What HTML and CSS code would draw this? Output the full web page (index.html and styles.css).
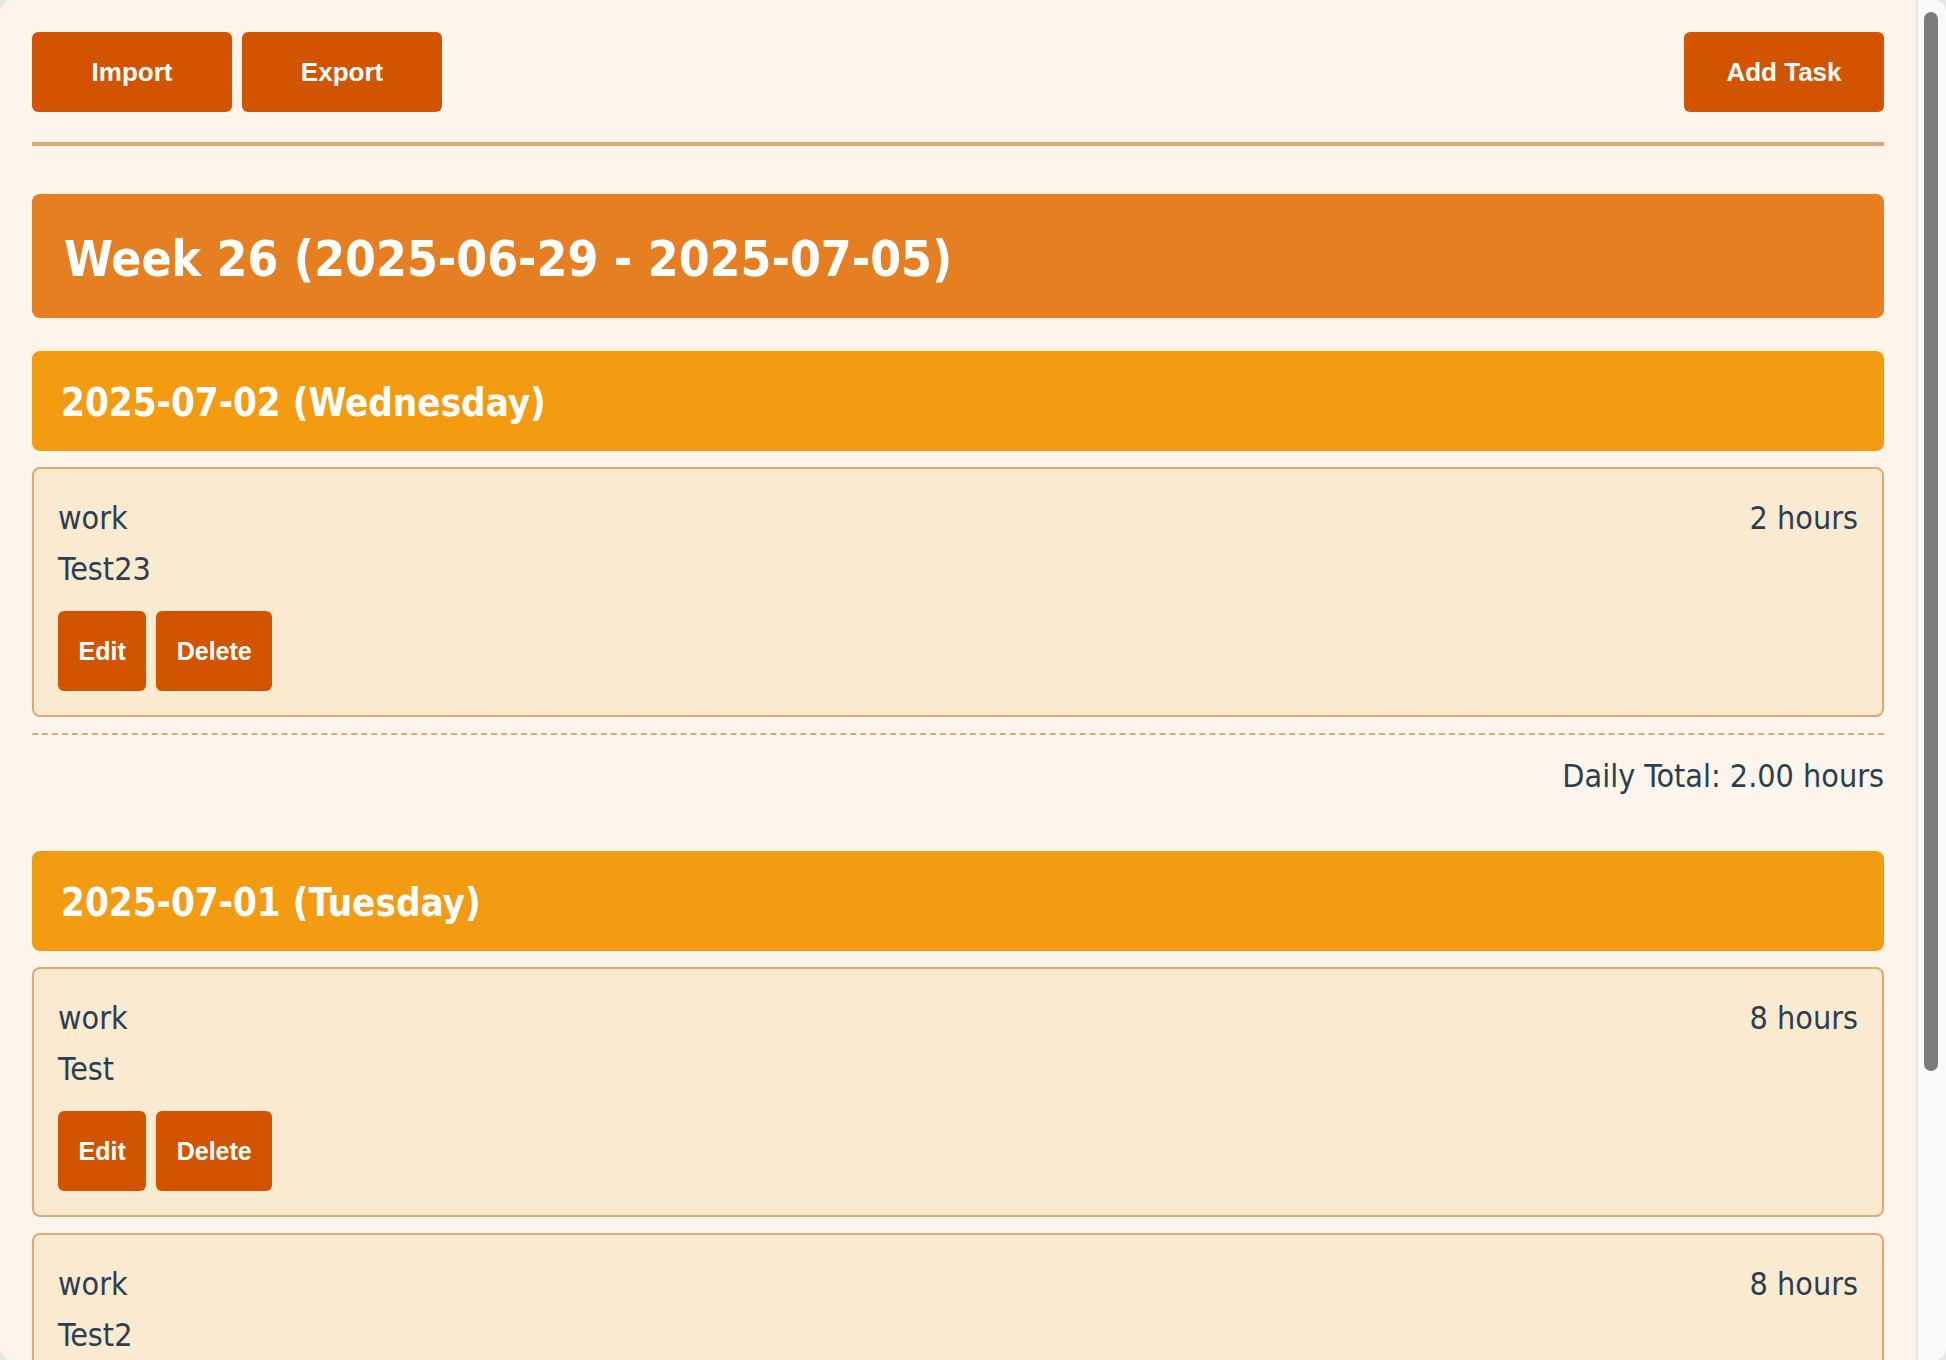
FILE: index.html
```html
<!DOCTYPE html>
<html lang="en">
<head>
<meta charset="utf-8">
<title>Time Tracker</title>
<link rel="stylesheet" href="styles.css">
</head>
<body>
<div class="viewport">
  <main class="page">
    <header class="toolbar">
      <div class="toolbar-group">
        <button class="btn btn-lg">Import</button>
        <button class="btn btn-lg">Export</button>
      </div>
      <button class="btn btn-lg">Add Task</button>
    </header>

    <section class="week">
      <h1 class="week-title">Week 26 (2025-06-29 - 2025-07-05)</h1>

      <div class="day">
        <h2 class="day-title">2025-07-02 (Wednesday)</h2>
        <div class="task">
          <div class="task-row"><span>work</span><span>2 hours</span></div>
          <div class="task-desc">Test23</div>
          <div class="task-actions">
            <button class="btn btn-sm">Edit</button>
            <button class="btn btn-sm">Delete</button>
          </div>
        </div>
        <div class="daily-total">Daily Total: 2.00 hours</div>
      </div>

      <div class="day">
        <h2 class="day-title">2025-07-01 (Tuesday)</h2>
        <div class="task">
          <div class="task-row"><span>work</span><span>8 hours</span></div>
          <div class="task-desc">Test</div>
          <div class="task-actions">
            <button class="btn btn-sm">Edit</button>
            <button class="btn btn-sm">Delete</button>
          </div>
        </div>
        <div class="task">
          <div class="task-row"><span>work</span><span>8 hours</span></div>
          <div class="task-desc">Test2</div>
          <div class="task-actions">
            <button class="btn btn-sm">Edit</button>
            <button class="btn btn-sm">Delete</button>
          </div>
        </div>
        <div class="daily-total">Daily Total: 16.00 hours</div>
      </div>
    </section>
  </main>
  <aside class="scrollbar"><div class="scrollbar-thumb"></div></aside>
</div>
</body>
</html>
```

FILE: styles.css
```css
html {
  background: #e9e6e6;
}
body {
  margin: 0;
}
.viewport {
  display: flex;
  height: 100vh;
  overflow: hidden;
  border-radius: 12px;
  background: #fdf5eb;
}
.page {
  flex: 1;
  min-width: 0;
  padding: 32px;
  overflow: hidden;
  font-family: "DejaVu Sans Condensed", "DejaVu Sans", sans-serif;
  font-stretch: condensed;
  font-size: 32px;
  line-height: 1.6;
  color: #2c3e50;
}
.toolbar {
  display: flex;
  justify-content: space-between;
  align-items: center;
  padding-bottom: 30px;
  border-bottom: 4px solid #e2a874;
  margin-bottom: 48px;
}
.toolbar-group {
  display: flex;
  gap: 10px;
}
.btn {
  background: #d35400;
  color: #fff;
  border: none;
  font-family: "Liberation Sans", Arial, sans-serif;
  font-weight: bold;
  cursor: pointer;
  border-radius: 6px;
}
.btn-lg {
  width: 200px;
  height: 80px;
  font-size: 26px;
  line-height: 30px;
  padding: 0;
}
.btn-sm {
  height: 80px;
  font-size: 25px;
  line-height: 30px;
  padding: 0 20.5px;
}
.week-title {
  margin: 0 0 33px;
  background: #e67e22;
  color: #fff;
  border-radius: 8px;
  font-size: 49.4px;
  line-height: 60px;
  padding: 35px 32px 29px;
  font-weight: bold;
}
.day {
  margin-bottom: 32px;
}
.day-title {
  margin: 0 0 16px;
  background: #f39c12;
  color: #fff;
  border-radius: 8px;
  font-size: 38.2px;
  line-height: 46px;
  padding: 29px 29px 25px;
  font-weight: bold;
}
.task {
  background: #faead0;
  border: 2px solid #e2a874;
  border-radius: 8px;
  padding: 24px;
  margin-bottom: 16px;
}
.task-row {
  display: flex;
  justify-content: space-between;
}
.task-actions {
  display: flex;
  gap: 10px;
  margin-top: 16px;
}
.daily-total {
  border-top: 2px dashed #e2a874;
  padding: 16px 0;
  text-align: right;
}
.scrollbar {
  width: 28px;
  flex: none;
  border-left: 2px solid #e6e6e6;
  background: #fafafa;
  padding-top: 12px;
}
.scrollbar-thumb {
  width: 14px;
  height: 1059px;
  margin-left: 6px;
  background: #7b7b7b;
  border-radius: 7px;
}
```
